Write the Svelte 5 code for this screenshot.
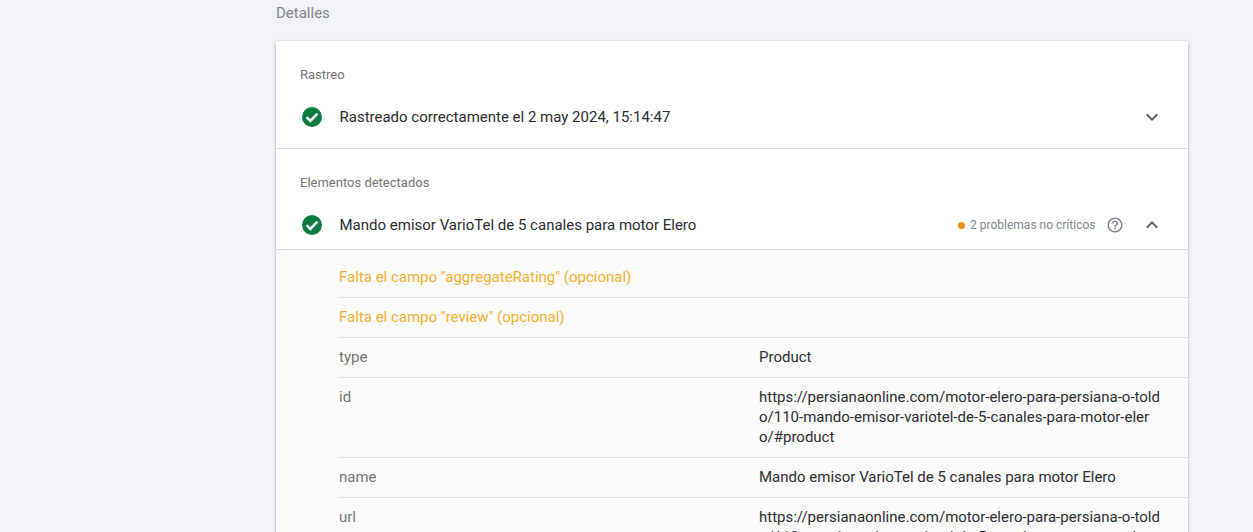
<script>
  const rows = [
    { key: 'type', value: 'Product' },
    { key: 'id', value: 'https://persianaonline.com/motor-elero-para-persiana-o-toldo/110-mando-emisor-variotel-de-5-canales-para-motor-elero/#product' },
    { key: 'name', value: 'Mando emisor VarioTel de 5 canales para motor Elero' },
    { key: 'url', value: 'https://persianaonline.com/motor-elero-para-persiana-o-toldo/110-mando-emisor-variotel-de-5-canales-para-motor-elero/' }
  ];
  const warnings = ['Falta el campo "aggregateRating" (opcional)', 'Falta el campo "review" (opcional)'];
</script>

{#snippet check()}
  <svg class="check" viewBox="0 0 24 24" width="24" height="24">
    <circle cx="12" cy="12" r="10" fill="#0d7a41" />
    <path d="M6.6 12.2l3.7 3.7 7.2-7.2" fill="none" stroke="#fff" stroke-width="2.6" />
  </svg>
{/snippet}

<main class="page">
  <h2 class="title">Detalles</h2>
  <section class="card">
    <div class="section first">
      <div class="label">Rastreo</div>
      <div class="row">
        {@render check()}
        <span class="text">Rastreado correctamente el 2 may 2024, 15:14:47</span>
        <svg class="chev" viewBox="0 0 24 24" width="24" height="24">
          <path d="M7.4 8.6L12 13.2l4.6-4.6L18 10l-6 6-6-6z" fill="#5f6368" />
        </svg>
      </div>
    </div>
    <div class="section second">
      <div class="label">Elementos detectados</div>
      <div class="row">
        {@render check()}
        <span class="text">Mando emisor VarioTel de 5 canales para motor Elero</span>
        <span class="issues"><i class="dot"></i>2 problemas no críticos</span>
        <svg class="help" viewBox="0 0 24 24" width="18" height="18">
          <path d="M11 18h2v-2h-2v2zm1-16C6.48 2 2 6.48 2 12s4.48 10 10 10 10-4.48 10-10S17.52 2 12 2zm0 18c-4.41 0-8-3.59-8-8s3.59-8 8-8 8 3.59 8 8-3.59 8-8 8zm0-14c-2.21 0-4 1.79-4 4h2c0-1.1.9-2 2-2s2 .9 2 2c0 2-3 1.75-3 5h2c0-2.25 3-2.5 3-5 0-2.21-1.79-4-4-4z" fill="#80868b" />
        </svg>
        <svg class="chev up" viewBox="0 0 24 24" width="24" height="24">
          <path d="M7.4 15.4L12 10.8l4.6 4.6L18 14l-6-6-6 6z" fill="#5f6368" />
        </svg>
      </div>
    </div>
    <div class="details">
      {#each warnings as w}
        <div class="line warn">{w}</div>
      {/each}
      {#each rows as r}
        <div class="line pair">
          <span class="key">{r.key}</span>
          <span class="value">{r.value}</span>
        </div>
      {/each}
    </div>
  </section>
</main>

<style>
  :global(body) {
    margin: 0;
    background: #f1f3f8;
    overflow: hidden;
  }
  .page {
    height: 532px;
    overflow: hidden;
    box-sizing: border-box;
    padding: 3px 65px 0 276px;
    font-family: Roboto, "Liberation Sans", sans-serif;
    font-size: 15px;
    line-height: 20px;
    color: #2b2c2f;
  }
  .title {
    margin: 0 0 18px;
    font-size: 15px;
    font-weight: 400;
    color: #80868b;
  }
  .card {
    background: #fff;
    border-radius: 2px;
    box-shadow: 0 1px 2px rgba(60, 64, 67, 0.3), 0 1px 3px 1px rgba(60, 64, 67, 0.15);
  }
  .section {
    border-bottom: 1px solid #dadce0;
  }
  .first {
    height: 107px;
  }
  .second {
    height: 100px;
  }
  .label {
    padding: 25px 0 0 24px;
    font-size: 13px;
    line-height: 18px;
    color: #757575;
  }
  .row {
    display: flex;
    align-items: center;
    height: 24px;
    margin-top: 21px;
    padding: 0 24.5px 0 24px;
  }
  .check {
    flex: none;
    margin: 0 16px 0 -0.5px;
  }
  .text {
    flex: 1;
  }
  .issues {
    display: flex;
    align-items: center;
    font-size: 12px;
    color: #80868b;
    margin-right: 10px;
  }
  .dot {
    width: 7px;
    height: 7px;
    margin-right: 5px;
    border-radius: 50%;
    background: #e8920c;
  }
  .help {
    margin-right: 16px;
  }
  .details {
    background: #fafafa;
    padding: 8px 0 0 63px;
  }
  .line {
    padding: 9px 0 10px;
    border-bottom: 1px solid #dadce0;
  }
  .warn {
    color: #f2b02e;
  }
  .pair {
    display: grid;
    grid-template-columns: 420px 404px;
  }
  .key {
    color: #757575;
  }
  .value {
    word-break: break-all;
  }
</style>
